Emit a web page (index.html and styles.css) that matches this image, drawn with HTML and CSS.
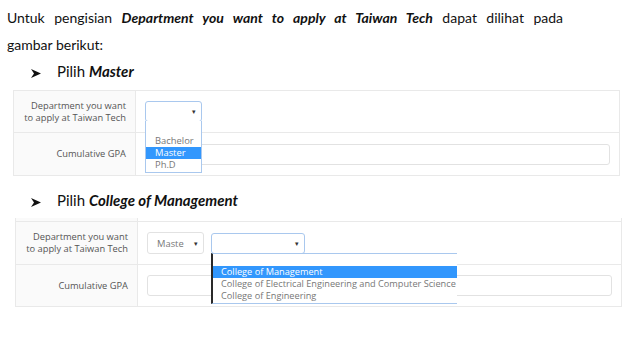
FILE: index.html
```html
<!DOCTYPE html>
<html lang="en">
<head>
    <meta charset="UTF-8">
    <title>Department you want to apply at Taiwan Tech</title>
    <link rel="stylesheet" href="styles.css">
</head>
<body>
    <div class="doc">
        <p class="para para-first">Untuk pengisian <b><i>Department you want to apply at Taiwan Tech</i></b> dapat dilihat pada</p>
        <p class="para">gambar berikut:</p>

        <div class="bullet">
            <svg class="bullet-mark" width="10" height="9" viewBox="0 0 10 9"><polygon points="0,0 10,4.5 0,9 3,4.5"/></svg>Pilih <b><i>Master</i></b>
        </div>

        <div class="form-table form-one">
            <div class="form-row">
                <div class="form-label">Department you want<br>to apply at Taiwan Tech</div>
                <div class="form-value">
                    <div class="select-wrap">
                        <div class="select select-focus select-degree"><span></span><span class="caret">&#9662;</span></div>
                        <ul class="options options-degree">
                            <li class="blank"></li>
                            <li>Bachelor</li>
                            <li class="active">Master</li>
                            <li>Ph.D</li>
                        </ul>
                    </div>
                </div>
            </div>
            <div class="form-row">
                <div class="form-label">Cumulative GPA</div>
                <div class="form-value"><div class="input"></div></div>
            </div>
        </div>

        <div class="bullet">
            <svg class="bullet-mark" width="10" height="9" viewBox="0 0 10 9"><polygon points="0,0 10,4.5 0,9 3,4.5"/></svg>Pilih <b><i>College of Management</i></b>
        </div>

        <div class="form-table form-two">
            <div class="form-row form-strip">
                <div class="form-label"></div>
                <div class="form-value"></div>
            </div>
            <div class="form-row">
                <div class="form-label">Department you want<br>to apply at Taiwan Tech</div>
                <div class="form-value">
                    <div class="select select-degree2"><span>Maste</span><span class="caret">&#9662;</span></div>
                    <div class="select-wrap">
                        <div class="select select-focus select-college"><span></span><span class="caret">&#9662;</span></div>
                        <ul class="options options-college">
                            <li class="blank"></li>
                            <li class="active">College of Management</li>
                            <li>College of Electrical Engineering and Computer Science</li>
                            <li>College of Engineering</li>
                        </ul>
                    </div>
                </div>
            </div>
            <div class="form-row form-row-last">
                <div class="form-label">Cumulative GPA</div>
                <div class="form-value"><div class="input"></div></div>
            </div>
        </div>
    </div>
</body>
</html>
```

FILE: styles.css
```css
* {
    margin: 0;
    padding: 0;
    box-sizing: border-box;
}

body {
    font-family: Lato, 'Open Sans', sans-serif;
    background: #fff;
    color: #111;
}

.doc {
    padding: 4px 0 0 7px;
}

.para {
    font-size: 14px;
    line-height: 27px;
    width: 556px;
}

.para-first {
    text-align: justify;
    text-align-last: justify;
}

.bullet {
    font-size: 15px;
    line-height: 26px;
    margin-left: 24px;
}

.bullet-mark {
    fill: #111;
    margin-right: 16px;
    vertical-align: -1px;
}

.form-table {
    width: 607px;
    border: 1px solid #e9e9e9;
    font-family: 'Open Sans', sans-serif;
    color: #555;
}

.form-one {
    margin: 6px 0 0 6px;
}

.form-two {
    margin: 5px 0 0 8px;
    border-top: none;
}

.form-one + .bullet {
    margin-top: 11px;
}

.form-row {
    display: flex;
    height: 42px;
    border-bottom: 1px solid #e9e9e9;
}

.form-row:last-child {
    border-bottom: none;
}

.form-two .form-row {
    height: 43px;
}

.form-two .form-strip {
    height: 4px;
}

.form-two .form-row-last {
    height: 41px;
}

.form-label {
    width: 122px;
    flex-shrink: 0;
    border-right: 1px solid #e9e9e9;
    background: #fafafa;
    font-size: 9.3px;
    line-height: 12px;
    text-align: right;
    padding-right: 9px;
    display: flex;
    align-items: center;
    justify-content: flex-end;
}

.form-value {
    flex: 1;
    display: flex;
    align-items: center;
    gap: 7px;
    padding: 0 9px 0 9px;
}

.select-wrap {
    position: relative;
}

.select {
    height: 21px;
    border: 1px solid #e2e2e2;
    border-radius: 3px;
    background: #fff;
    display: flex;
    align-items: center;
    justify-content: space-between;
    padding: 0 5px 0 9px;
    font-size: 9.4px;
    color: #777;
}

.select-focus {
    border-color: #a9c8ee;
}

.caret {
    font-size: 7px;
    color: #333;
}

.select-degree {
    width: 57px;
}

.select-degree2 {
    width: 57px;
    height: 22px;
}

.select-college {
    width: 94px;
}

.options {
    list-style: none;
    position: absolute;
    top: 20px;
    left: 0;
    background: #fff;
    font-size: 9.4px;
    line-height: 12px;
    color: #777;
    z-index: 2;
}

.options li {
    height: 12px;
    white-space: nowrap;
}

.options .active {
    background: #3297fd;
    color: #fff;
}

.options-degree {
    width: 57px;
    border: 1px solid #a9c8ee;
    border-top: none;
    padding-bottom: 1px;
}

.options-degree .blank {
    height: 14px;
}

.options-degree li {
    padding-left: 9px;
}

.options-college {
    width: 246px;
    border-top: 1px solid #a9c8ee;
    border-bottom: 1px solid #a9c8ee;
    border-left: 2px solid #2a2a2a;
    padding-bottom: 1px;
}

.options-college li {
    padding-left: 8px;
    font-size: 9.2px;
}

.input {
    flex: 1;
    height: 21px;
    border: 1px solid #e2e2e2;
    border-radius: 3px;
    background: #fff;
}
```
